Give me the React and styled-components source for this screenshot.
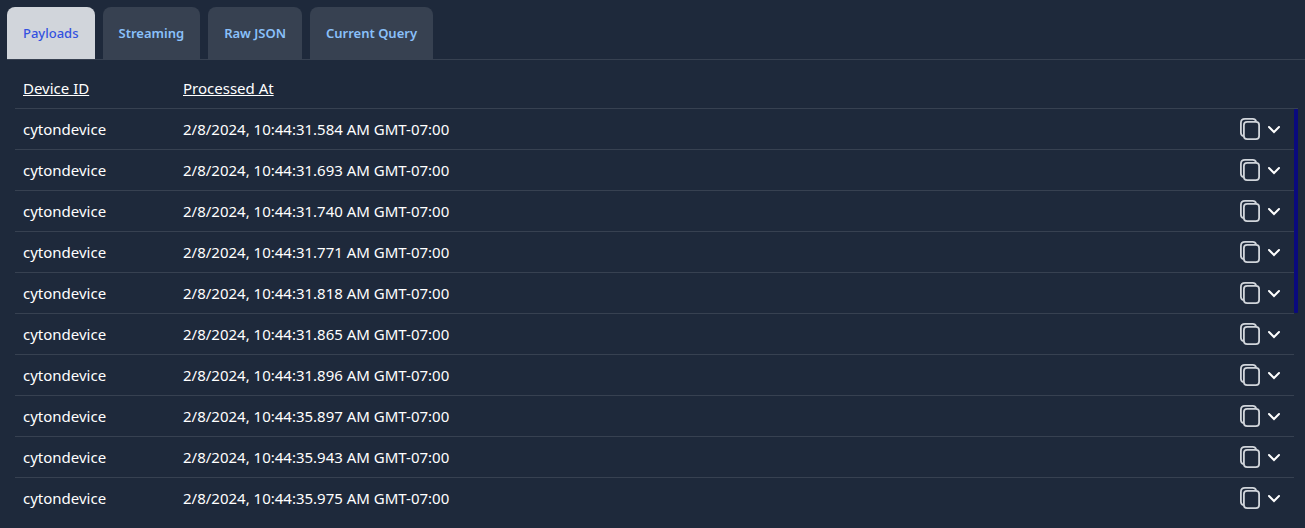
import styled, { createGlobalStyle } from "styled-components";
import { useState } from "react";

const GlobalStyle = createGlobalStyle`
  * {
    box-sizing: border-box;
  }
  body {
    margin: 0;
    background: #1e293b;
    color: #ffffff;
    font-family: "Segoe UI", "Noto Sans", "Open Sans", sans-serif;
    font-size: 15px;
    line-height: 24px;
  }
`;

const Container = styled.div`
  padding: 7px 0 8px 7px;
`;

const TabList = styled.div`
  display: flex;
  gap: 8px;
  border-bottom: 1px solid #374151;
`;

const Tab = styled.button`
  padding: 16px;
  border: none;
  border-radius: 8px 8px 0 0;
  font-family: inherit;
  font-size: 13px;
  line-height: 20px;
  font-weight: ${(props) => (props.$active ? 500 : 600)};
  color: ${(props) => (props.$active ? "#3452e0" : "#8ac0fa")};
  background: ${(props) => (props.$active ? "#d1d5db" : "#374151")};
  cursor: pointer;
`;

const Panel = styled.div`
  padding: 8px 7px 0 8px;
`;

const Table = styled.table`
  display: block;
`;

const Head = styled.thead`
  display: block;
`;

const Body = styled.tbody`
  display: block;
  padding-right: 4px;
`;

const Row = styled.tr`
  display: grid;
  grid-template-columns: 160px 1fr auto;
  border-bottom: 1px solid #374151;
  tbody &:last-child {
    border-bottom: none;
  }
`;

const HeadCell = styled.th`
  padding: 8px;
  text-align: left;
  font-weight: 400;
  text-decoration: underline;
`;

const Cell = styled.td`
  padding: 8px;
`;

const ActionCell = styled(Cell)`
  display: flex;
`;

const IconButton = styled.button`
  display: flex;
  padding: 0;
  border: none;
  background: none;
  color: ${(props) => props.$color};
  cursor: pointer;
`;

const BodyArea = styled.div`
  position: relative;
`;

const ScrollThumb = styled.div`
  position: absolute;
  right: 0;
  bottom: 0;
  width: 4px;
  height: 204px;
  margin-bottom: 205px;
  border-radius: 1px;
  background: #0a0a7d;
`;

const CopyIcon = () => (
  <svg width="24" height="24" viewBox="0 0 24 24" fill="none" stroke="currentColor">
    <rect x="5.9" y="4.9" width="15.2" height="17.2" rx="3.2" strokeWidth="1.8" />
    <path
      d="M18.2 4.6C17.6 2.8 16.6 1.9 14.8 1.9H7C4.6 1.9 2.9 3.5 2.9 6V15.8C2.9 17.6 3.9 18.8 5.6 19.2"
      strokeWidth="1.8"
    />
  </svg>
);

const ChevronIcon = () => (
  <svg width="24" height="24" viewBox="0 0 24 24" fill="none" stroke="currentColor">
    <path d="M7 10L12 15L17 10" strokeWidth="2" strokeLinecap="round" />
  </svg>
);

const tabs = ["Payloads", "Streaming", "Raw JSON", "Current Query"];

const payloads = [
  "2/8/2024, 10:44:31.584 AM GMT-07:00",
  "2/8/2024, 10:44:31.693 AM GMT-07:00",
  "2/8/2024, 10:44:31.740 AM GMT-07:00",
  "2/8/2024, 10:44:31.771 AM GMT-07:00",
  "2/8/2024, 10:44:31.818 AM GMT-07:00",
  "2/8/2024, 10:44:31.865 AM GMT-07:00",
  "2/8/2024, 10:44:31.896 AM GMT-07:00",
  "2/8/2024, 10:44:35.897 AM GMT-07:00",
  "2/8/2024, 10:44:35.943 AM GMT-07:00",
  "2/8/2024, 10:44:35.975 AM GMT-07:00",
].map((processedAt) => ({ deviceId: "cytondevice", processedAt }));

function App() {
  const [activeTab, setActiveTab] = useState("Payloads");

  return (
    <Container>
      <GlobalStyle />
      <TabList role="tablist">
        {tabs.map((tab) => (
          <Tab
            key={tab}
            role="tab"
            aria-selected={tab === activeTab}
            $active={tab === activeTab}
            onClick={() => setActiveTab(tab)}
          >
            {tab}
          </Tab>
        ))}
      </TabList>
      <Panel role="tabpanel">
        <BodyArea>
          <Table>
            <Head>
              <Row>
                <HeadCell>Device ID</HeadCell>
                <HeadCell>Processed At</HeadCell>
              </Row>
            </Head>
            <Body>
              {payloads.map((payload) => (
                <Row key={payload.processedAt}>
                  <Cell>{payload.deviceId}</Cell>
                  <Cell>{payload.processedAt}</Cell>
                  <ActionCell>
                    <IconButton aria-label="Copy payload" $color="#d1d5db">
                      <CopyIcon />
                    </IconButton>
                    <IconButton aria-label="Expand payload" $color="#ffffff">
                      <ChevronIcon />
                    </IconButton>
                  </ActionCell>
                </Row>
              ))}
            </Body>
          </Table>
          <ScrollThumb />
        </BodyArea>
      </Panel>
    </Container>
  );
}
export default App;
